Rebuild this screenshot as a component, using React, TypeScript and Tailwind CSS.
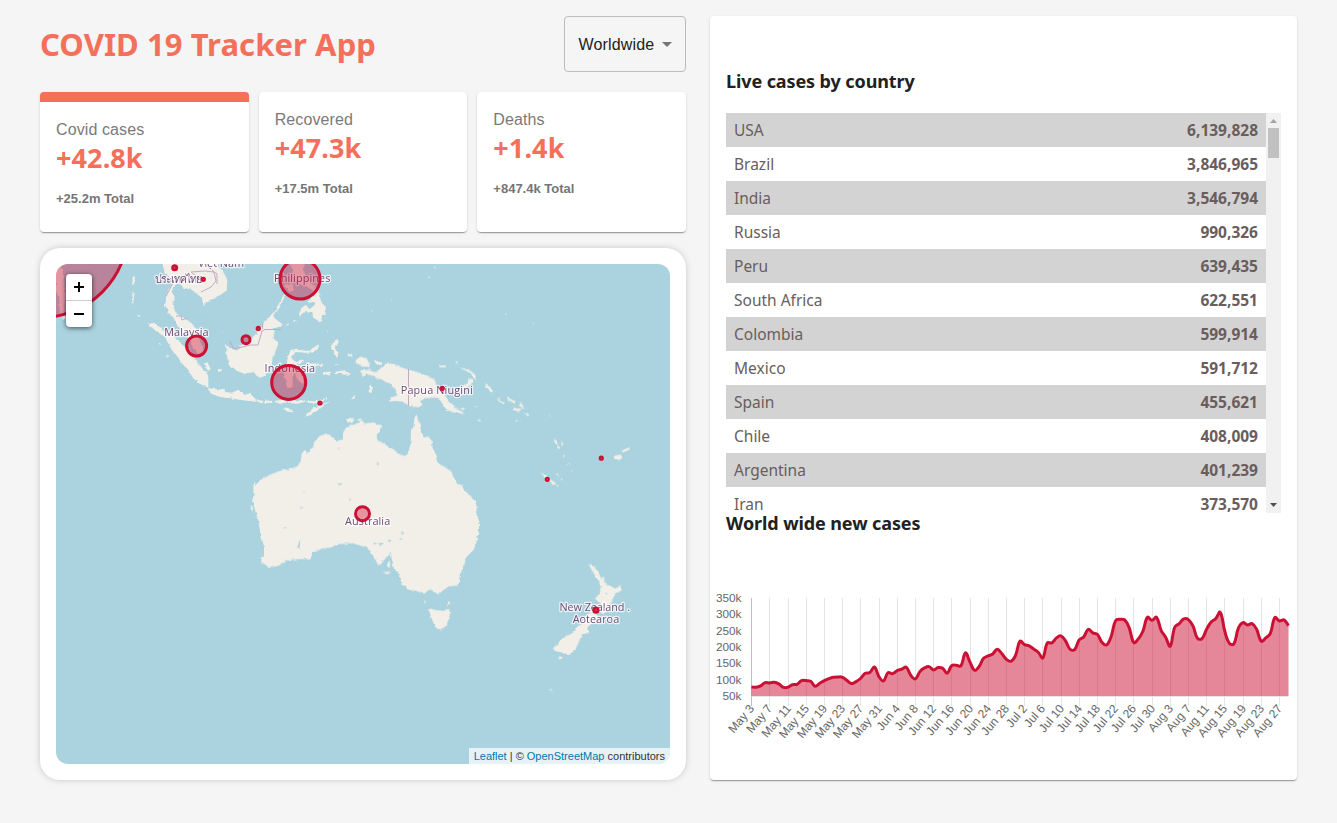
import React from 'react';

const stats = [
  { title: 'Covid cases', today: '+42.8k', total: '+25.2m Total', selected: true },
  { title: 'Recovered', today: '+47.3k', total: '+17.5m Total', selected: false },
  { title: 'Deaths', today: '+1.4k', total: '+847.4k Total', selected: false },
];

const countries: [string, string][] = [
  ['USA', '6,139,828'], ['Brazil', '3,846,965'], ['India', '3,546,794'], ['Russia', '990,326'],
  ['Peru', '639,435'], ['South Africa', '622,551'], ['Colombia', '599,914'], ['Mexico', '591,712'],
  ['Spain', '455,621'], ['Chile', '408,009'], ['Argentina', '401,239'], ['Iran', '373,570'],
];

/* Daily values, as thirds of a pixel below the chart's top edge. */
const series = [
  307, 308, 304, 294, 295, 293, 298, 308, 308, 300, 299, 288, 288, 290, 305, 296, 288, 282, 278, 277,
  278, 288, 297, 291, 281, 266, 264, 247, 276, 289, 264, 267, 258, 254, 248, 272, 283, 261, 250, 246,
  256, 249, 251, 266, 243, 242, 244, 205, 232, 257, 246, 221, 214, 208, 194, 207, 224, 230, 213, 170,
  180, 184, 193, 203, 220, 175, 175, 160, 154, 169, 194, 195, 166, 157, 134, 145, 149, 173, 181, 157,
  108, 104, 106, 130, 174, 163, 140, 98, 107, 98, 137, 158, 185, 128, 117, 103, 105, 124, 161, 162,
  134, 112, 102, 83, 140, 176, 178, 130, 114, 121, 117, 134, 170, 160, 146, 99, 109, 106, 123,
];

const dates = [
  'May 3', 'May 7', 'May 11', 'May 15', 'May 19', 'May 23', 'May 27', 'May 31', 'Jun 4', 'Jun 8',
  'Jun 12', 'Jun 16', 'Jun 20', 'Jun 24', 'Jun 28', 'Jul 2', 'Jul 6', 'Jul 10', 'Jul 14', 'Jul 18',
  'Jul 22', 'Jul 26', 'Jul 30', 'Aug 3', 'Aug 7', 'Aug 11', 'Aug 15', 'Aug 19', 'Aug 23', 'Aug 27',
];

const X0 = 41.5;
const STEP = 4.551;

function curve() {
  const p = series.map((v, i) => [X0 + i * STEP, v / 3]);
  const ctl = p.map((c, i) => {
    const a = p[Math.max(0, i - 1)];
    const b = p[Math.min(p.length - 1, i + 1)];
    const d1 = Math.hypot(c[0] - a[0], c[1] - a[1]);
    const d2 = Math.hypot(b[0] - c[0], b[1] - c[1]);
    const f1 = (0.4 * d1) / (d1 + d2);
    const f2 = (0.4 * d2) / (d1 + d2);
    const dx = b[0] - a[0];
    const dy = b[1] - a[1];
    return [c[0] - f1 * dx, c[1] - f1 * dy, c[0] + f2 * dx, c[1] + f2 * dy];
  });
  let d = `M${p[0][0]} ${p[0][1]}`;
  for (let i = 1; i < p.length; i++) {
    d += `C${ctl[i - 1][2]} ${ctl[i - 1][3]} ${ctl[i][0]} ${ctl[i][1]} ${p[i][0]} ${p[i][1]}`;
  }
  return d;
}

function Chart() {
  const line = curve();
  const right = X0 + 118 * STEP;
  return (
    <svg width="587" height="165" viewBox="0 0 587 165" className="block" fontFamily="'Liberation Sans', sans-serif" fontSize="12" fill="#666">
      {['350k', '300k', '250k', '200k', '150k', '100k', '50k'].map((t, i) => (
        <text key={t} x="31.5" y={17 + i * 16.33} textAnchor="end" fontSize="11.8">{t}</text>
      ))}
      {dates.map((t, i) => {
        const x = Math.round(X0 + i * 4 * STEP - 0.4) + 0.5;
        return (
          <g key={t}>
            <path d={`M${x} 13V121`} stroke={i ? '#e5e5e5' : '#bfbfbf'} />
            <text transform={`translate(${x + 0.2} 121.2) rotate(-50)`} textAnchor="end" y="4">{t}</text>
          </g>
        );
      })}
      <path d={`M${X0} 111.5H${right}`} stroke="#e5e5e5" />
      <g transform="translate(0 -0.4)">
        <path d={`${line}V111.4H${X0}Z`} fill="#cc1034" fillOpacity="0.5" />
        <path d={line} fill="none" stroke="#cc1034" strokeWidth="3" strokeLinejoin="round" />
      </g>
    </svg>
  );
}

const circles = [
  [40.2, 229.6, 88], [196.6, 346, 10], [300, 279, 20], [288.7, 382.4, 17], [246, 339.7, 4],
  [362.5, 513.7, 7], [174.7, 267.7, 2], [203.3, 279.3, 1.1], [258.3, 328.4, 1.1], [320, 403, 1.1],
  [442.3, 388.3, 1.1], [601.3, 458.2, 1.1], [547.3, 479.3, 1.1], [595.9, 610.2, 2.1],
];

const labels: [string, number, number, number][] = [
  ['Việt Nam', 198, 267, 46], ['ประเทศไทย', 155, 283, 47], ['Philippines', 274, 281.8, 56.5],
  ['Malaysia', 164.3, 335.6, 44.3], ['Indonesia', 264.6, 372.4, 50.5], ['Papua Niugini', 400.7, 394, 72],
  ['Australia', 345, 524.6, 45.2], ['New Zealand .', 559.5, 610.7, 70.5], ['Aotearoa', 572.7, 622.7, 46.5],
];

function WorldMap() {
  return (
    <svg width="614" height="500" viewBox="56 264 614 500" className="block">
      <defs>
        <filter id="coast" x="-5%" y="-5%" width="110%" height="110%" colorInterpolationFilters="sRGB">
          <feTurbulence type="fractalNoise" baseFrequency="0.25" numOctaves="2" seed="4" />
          <feDisplacementMap in="SourceGraphic" scale="3.2" xChannelSelector="R" yChannelSelector="G" />
        </filter>
      </defs>
      <rect x="56" y="264" width="614" height="500" fill="#aad3df" />
      <g filter="url(#coast)" fill="#f2efe9">
        <g transform="translate(50 255) scale(.33333)">
          <path d="M335 10L340 40 345 55 365 70 368 85 355 105 350 120 345 150 355 172 372 190 378 205 395 225 415 250 425 270 440 292 458 300 462 290 455 270 447 250 440 225 425 205 405 190 395 185 378 175 368 150 374 125 365 110 370 95 385 85 395 90 402 105 420 100 440 118 455 125 460 150 475 140 490 130 515 118 530 105 532 75 520 50 505 35 500 10Z" />
          <path d="M293 203L320 208 335 222 352 235 370 245 385 255 400 272 420 285 430 300 440 320 450 330 460 345 472 352 475 370 475 398 455 392 430 370 415 345 395 325 380 300 360 275 345 245 320 230 300 212Z" />
          <path d="M473 400L500 402 520 405 528 412 545 413 565 405 580 415 605 418 615 430 620 440 590 437 550 431 510 426 480 413Z" />
          <path d="M528 265L535 275 555 285 570 275 590 265 605 250 620 235 640 205 655 190 665 178 680 195 698 208 690 215 672 220 675 235 670 250 685 265 678 285 668 305 665 330 655 345 645 362 630 368 620 362 610 350 585 357 560 347 540 337 535 315 530 300Z" />
          <path d="M713 305L722 296 725 310 735 320 740 326 745 335 750 350 760 375 768 380 755 388 740 370 735 355 728 365 728 395 712 400 705 370 700 350 710 330Z" />
          <path d="M664 180L680 160 702 118 706 121 688 160 668 184Z" />
          <path d="M715 20L760 20 762 45 768 75 790 90 808 108 800 115 782 102 765 92 745 85 735 70 730 45ZM700 90L725 85 735 105 720 110Z" />
          <path d="M28 27L42 60 45 120 42 178 30 182 28 130 18 110 18 27ZM35 178L48 178 50 192 38 195ZM250 62L255 65 252 90 247 85ZM248 110L252 120 250 150 246 140ZM262 178L270 182 266 187ZM462 325L472 322 482 342 474 348ZM504 342L515 343 514 350 504 350ZM512 228L518 230 514 234ZM325 262L334 268 330 274ZM350 300L358 306 354 310Z" />
          <path d="M622 434L640 438 636 446 624 442ZM645 436L665 437 668 443 645 444ZM672 438L700 434 712 442 690 446 675 443ZM715 438L745 436 766 436 764 441 740 446 715 444ZM698 461L715 460 730 472 712 470ZM888 490L898 494 892 500Z" />
        </g>
        <g transform="translate(285 262) scale(.33333)">
          <path d="M45 142L62 128 74 142 88 130 96 112 105 108 112 125 122 132 122 152 114 160 112 178 98 178 84 166 82 150 66 150 54 152 48 166 43 160ZM82 88L104 92 102 114 88 122 70 120 78 108Z" />
          <path d="M8 300L8 285 18 264 34 260 50 266 76 266 100 246 102 254 84 272 60 272 32 270 14 288 20 302ZM25 306L50 292 58 298 44 306ZM66 304L112 306 112 311 68 310Z" />
          <path d="M138 252L148 236 159 230 157 248 149 256 160 268 158 286 147 276 148 264 139 264ZM114 330L136 329 134 339 116 338ZM146 330L180 325 197 336 190 341 166 334 150 336ZM152 308L162 306 158 312Z" />
          <path d="M255 368L264 376 259 394 251 390ZM198 412L212 397 208 410ZM186 276L205 278 202 284 188 282ZM268 294L290 302 286 310 270 302Z" />
          <path d="M62 417L90 418 126 407 124 413 92 424 64 422ZM58 464L82 440 108 428 136 418 108 436 80 458ZM0 436L22 444 24 450 2 444ZM126 198L130 204 127 214ZM0 190L12 184 10 190ZM24 178L34 174 28 180Z" />
        </g>
        <g transform="translate(340 255) scale(.33333)">
          <path d="M90 345L85 335 70 335 42 320 60 305 80 310 87 325 88 345 105 352 120 340 145 323 165 330 200 342 235 352 262 362 285 375 290 395 310 415 325 435 345 458 375 478 345 473 320 465 300 435 285 428 255 430 240 440 248 450 235 457 208 453 190 440 170 438 148 440 150 430 172 420 165 400 150 385 120 372 95 362 78 355 68 367 62 345Z" />
          <path d="M338 403L365 397 383 385 385 370 398 372 401 380 385 395 350 409ZM358 338L385 343 405 358 411 375 402 370 392 354ZM435 384L447 392 460 410 453 412 440 400ZM500 426L527 439 523 443 505 435ZM540 440L552 460 548 463 539 446ZM470 428L495 444 490 448 474 437ZM520 457L542 464 538 469 523 465ZM552 473L567 480 564 485ZM528 493L540 500 530 500ZM598 648L615 660 648 686 642 690 618 672ZM640 552L650 557 655 570 646 565ZM652 570L661 577 655 583ZM664 557L670 565 665 575ZM668 598L675 603 670 607ZM683 622L690 630 684 628ZM825 601L842 599 848 608 838 615 824 610ZM844 588L868 576 870 582 850 592ZM298 331L318 331 316 337 298 336ZM345 320L354 322 350 327Z" />
          <path d="M18 493L42 490 38 500 22 501ZM50 494L66 490 60 500ZM410 490L425 497 418 499ZM360 457L376 460 368 466ZM268 65L272 68 268 71ZM282 34L288 37 283 41ZM93 166L97 168 95 172ZM152 131L156 133 153 135ZM495 177L502 179 496 182ZM578 203L583 205 580 208ZM400 450L410 453 404 457ZM626 480L634 481 630 484ZM648 655L656 660 652 664ZM662 670L668 673 664 677ZM694 646L699 649 695 651ZM648 690L656 692 651 695Z" />
        </g>
        <g transform="translate(230 400) scale(.33333)">
          <path d="M559 43L565 60 572 75 578 105 583 112 595 110 605 122 608 145 618 160 625 190 640 198 655 208 670 220 672 232 682 252 695 255 702 270 720 285 735 303 740 318 740 345 748 365 746 395 738 430 730 452 715 465 703 490 690 520 687 550 680 557 655 560 640 570 625 584 612 575 600 565 585 580 575 580 555 570 535 567 518 555 514 540 505 520 492 508 487 485 482 455 474 468 462 480 445 497 437 480 422 455 410 440 390 437 370 430 325 432 300 443 275 446 250 458 240 477 205 477 170 482 145 498 115 501 98 488 90 485 93 472 102 470 102 440 92 400 85 365 75 330 66 300 70 290 70 260 75 245 78 258 90 240 125 222 150 212 195 203 212 185 215 160 225 150 235 160 240 148 255 140 250 128 262 118 268 108 290 101 310 112 318 125 338 117 340 95 358 75 380 72 395 60 403 70 430 68 445 73 460 78 450 85 450 95 440 105 442 120 460 130 490 148 505 160 525 168 535 160 542 130 543 90 550 82 553 55Z" />
          <path d="M597 625L625 632 658 627 659 650 650 675 632 692 615 680 603 650ZM583 600L588 605 585 612ZM652 602L660 608 656 618ZM460 516L482 515 476 522 461 521ZM472 492L478 480 483 498 474 503ZM349 58L372 56 366 65 350 65ZM57 312L70 325 68 333Z" />
          <g fill="#aad3df">
            <path d="M322 142L330 146 324 148ZM325 250L334 249 326 260ZM440 186L449 190 441 192ZM220 270L228 274 221 277ZM206 424L211 418 208 450 204 438ZM160 382L174 382 162 385ZM430 428L444 430 432 434ZM446 428L462 430 450 438ZM476 418L484 422 478 432ZM508 414L520 417 510 420ZM516 390L520 400 515 405ZM356 295L365 298 358 300ZM210 320L222 323 212 325Z" />
          </g>
        </g>
        <g transform="translate(500 430) scale(.33333)">
          <path d="M264 399L285 410 298 432 305 450 310 438 315 458 330 468 345 476 362 464 361 482 343 495 335 515 318 548 300 550 305 525 285 505 300 490 302 470 295 450 280 430Z" />
          <path d="M280 540L295 560 270 585 260 598 272 605 245 615 235 640 225 660 207 675 190 668 165 663 159 655 180 632 215 608 240 585 262 555ZM178 678L188 684 176 690ZM148 778L156 780 152 786Z" />
          <path d="M316 486L323 488 320 495Z" fill="#aad3df" />
        </g>
      </g>
      <g fill="none" stroke="#c3a9c4" strokeWidth="1">
        <path d="M408.5 369V406M176 316L181 316 182 320 187 318M229.500 341L234 349 250 345 258 345 262 331 265 329.500 281 329.500M262.500 323V329" />
        <path d="M172.500 284L166 296M196 276L191 272 205 271 214 272 216 281 211 287 201 292M204 264L212 270 217 274 217 284" />
      </g>
      <g fontFamily="'Open Sans', 'Noto Sans', sans-serif" fontSize="10.900" fill="#6b4a72" stroke="#fff" strokeOpacity="0.75" strokeWidth="2.600" strokeLinejoin="round" className="[paint-order:stroke]">
        {labels.map(([t, x, y, w]) => (
          <text key={t} x={x} y={y} textLength={w}>{t}</text>
        ))}
      </g>
      <g fill="#cc1034" fillOpacity="0.4" stroke="#cc1034" strokeWidth="3">
        {circles.map(([x, y, r]) => (
          <circle key={x} cx={x} cy={y} r={r} />
        ))}
      </g>
    </svg>
  );
}

const cardShadow = 'shadow-[0_2px_1px_-1px_rgba(0,0,0,0.2),0_1px_1px_0_rgba(0,0,0,0.14),0_1px_3px_0_rgba(0,0,0,0.12)]';

export default function App() {
  return (
    <div className="flex h-[823px] w-[1337px] gap-6 overflow-hidden bg-[#f5f5f5] px-10 pt-4 font-['Liberation_Sans',Arial,sans-serif]">
      <div className="flex w-[646px] flex-col">
        <header className="mb-5 flex h-14 items-center justify-between">
          <h1 className="whitespace-nowrap font-['Noto_Sans',sans-serif] text-[31px] font-bold leading-none tracking-[0.08px] text-[#f5705b]">COVID 19 Tracker App</h1>
          <button className="flex h-14 w-[122px] items-center justify-between rounded border border-[#bcbcbc] pl-[13.5px] pr-[13px] pt-px text-base tracking-[0.15px] text-[#212121]">
            Worldwide
            <svg width="10" height="5" viewBox="0 0 10 5"><path d="M0 0h10L5 5z" fill="#757575" /></svg>
          </button>
        </header>
        <section className="mb-4 grid h-[140px] grid-cols-3 gap-2.5">
          {stats.map((s) => (
            <article key={s.title} className={`rounded bg-white px-4 pt-4 ${cardShadow} ${s.selected ? 'border-t-10 border-[#f5705b]' : ''}`}>
              <p className="text-base leading-6 tracking-[0.1px] text-[#7a7a7a]">{s.title}</p>
              <h2 className="font-['Noto_Sans',sans-serif] text-[27px] font-bold leading-8 tracking-[0.1px] text-[#f5705b]">{s.today}</h2>
              <p className="mt-[17px] text-[13px] font-bold leading-4 text-[#757575]">{s.total}</p>
            </article>
          ))}
        </section>
        <section className="h-[532px] rounded-[20px] bg-white p-4 shadow-[0_0_8px_-2px_rgba(0,0,0,0.3)]">
          <div className="relative h-[500px] overflow-hidden rounded-xl">
            <WorldMap />
            <div className="absolute left-2.5 top-2.5 w-[26px] overflow-hidden rounded bg-white shadow-[0_1px_5px_rgba(0,0,0,0.65)]">
              <button className="flex h-[27px] w-full items-center justify-center border-b border-[#ccc]">
                <svg width="10" height="10" viewBox="0 0 10 10"><path d="M5 0v10M0 5h10" stroke="#000" strokeWidth="2" /></svg>
              </button>
              <button className="flex h-[26px] w-full items-center justify-center">
                <svg width="10" height="10" viewBox="0 0 10 10"><path d="M0 5h10" stroke="#000" strokeWidth="2" /></svg>
              </button>
            </div>
            <p className="absolute bottom-0 right-0 whitespace-nowrap bg-white/70 px-[5px] text-[11px] leading-4 text-[#333]">
              <span className="text-[#0078a8]">Leaflet</span> | © <span className="text-[#0078a8]">OpenStreetMap</span> contributors
            </p>
          </div>
        </section>
      </div>
      <section className={`flex h-[764px] w-[587px] flex-col rounded bg-white pt-[53px] ${cardShadow}`}>
        <h3 className="mb-5 px-4 font-['Noto_Sans',sans-serif] text-[18px] font-bold leading-6 tracking-[-0.1px] text-[#212121]">Live cases by country</h3>
        <div className="mx-4 flex h-[400px] overflow-hidden">
          <ul className="w-[540px] font-['Noto_Sans',sans-serif] text-[15.5px] text-[#6a5d5d]">
            {countries.map(([name, n]) => (
              <li key={name} className="flex h-[34px] items-center justify-between px-2 pt-0.5 odd:bg-[#d3d3d3]">
                <span>{name}</span>
                <strong className="font-bold">{n}</strong>
              </li>
            ))}
          </ul>
          <div className="flex w-[15px] flex-col items-center justify-between bg-[#f1f1f1] pb-1.5 pt-1.5">
            <div className="flex flex-col items-center gap-[5px]">
              <svg width="7" height="4" viewBox="0 0 7 4"><path d="M3.500 0L7 4H0z" fill="#a3a3a3" /></svg>
              <div className="h-[30px] w-[11px] bg-[#c1c1c1]" />
            </div>
            <svg width="7" height="4" viewBox="0 0 7 4"><path d="M0 0h7L3.500 4z" fill="#505050" /></svg>
          </div>
        </div>
        <h3 className="mb-[50px] -mt-0.5 px-4 font-['Noto_Sans',sans-serif] text-[18px] font-bold leading-6 tracking-[-0.1px] text-[#212121]">World wide new cases</h3>
        <Chart />
      </section>
    </div>
  );
}
